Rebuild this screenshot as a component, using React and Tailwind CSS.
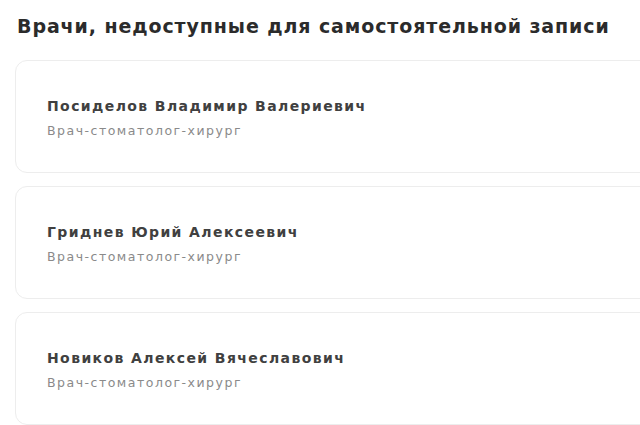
export default function App() {
  const doctors = [
    "Посиделов Владимир Валериевич",
    "Гриднев Юрий Алексеевич",
    "Новиков Алексей Вячеславович",
  ];
  return (
    <div className="w-[640px] h-[425px] overflow-hidden bg-white pl-[15px] pt-[12px]" style={{ fontFamily: "'DejaVu Sans', sans-serif" }}>
      <h1 className="text-[19px] font-bold text-[#2b2b2b] leading-[28px] pl-[2px] tracking-[0.9px]">
        Врачи, недоступные для самостоятельной записи
      </h1>
      <div className="mt-[20px] flex flex-col gap-[13px] w-[660px]">
        {doctors.map((d) => (
          <div key={d} className="h-[113px] rounded-[12px] border border-[#ededed] bg-white pl-[31px] pt-[35px]">
            <div className="text-[14px] font-bold text-[#404040] leading-[20px] tracking-[1.4px]">{d}</div>
            <div className="mt-[7px] text-[12.5px] text-[#8a8a8a] leading-[16px] tracking-[1.5px]">Врач-стоматолог-хирург</div>
          </div>
        ))}
      </div>
    </div>
  );
}
